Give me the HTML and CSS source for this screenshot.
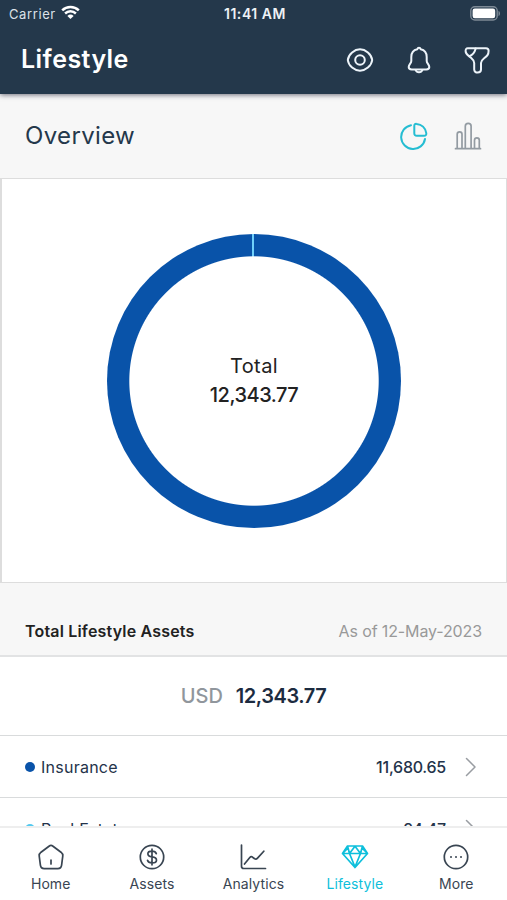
FILE: index.html
```html
<!DOCTYPE html>
<html lang="en">
<head>
<meta charset="utf-8">
<meta name="viewport" content="width=device-width, initial-scale=1">
<title>Lifestyle</title>
<link rel="stylesheet" href="styles.css">
</head>
<body>
<div class="app">
  <header class="header">
    <div class="status">
      <div class="carrier"><span>Carrier</span>
        <svg width="19" height="15" viewBox="0 0 19 15" fill="none" stroke="#fff" stroke-width="2.5"><path d="M1.2 5.4a12 12 0 0 1 16.6 0M4.1 8.5a7.8 7.8 0 0 1 10.8 0"/><path d="M9.5 14 6.4 10.9a4.5 4.5 0 0 1 6.2 0z" fill="#fff" stroke="none"/></svg>
      </div>
      <span class="clock">11:41 AM</span>
      <svg class="battery" width="31" height="15" viewBox="0 0 31 15"><rect x=".8" y=".8" width="26.4" height="13.2" rx="4" fill="#24384b" stroke="#7d8995" stroke-width="1.4"/><rect x="2.6" y="2.6" width="22.6" height="9.6" rx="2.2" fill="#fff"/><path d="M28.5 5c2 .6 2 4.400 0 5z" fill="#7d8995"/></svg>
    </div>
    <div class="titlebar">
      <h1 class="title">Lifestyle</h1>
      <div class="actions">
        <svg width="28" height="28" viewBox="0 0 28 28"><path d="M1.800 14C2.500 8 8.500 3.300 14 3.300S25.500 8 26.200 14C25.500 20 19.500 24.700 14 24.700S2.500 20 1.800 14z"/><circle cx="14" cy="14" r="4.800"/></svg>
        <svg width="28" height="28" viewBox="0 0 28 28"><path d="M14 1.800c1 0 1.500.8 1.700 1.500 4 .9 6 3.700 6 7.700v4c0 2.400 2.600 3.500 2.600 6 0 1.800-1.200 2.400-3 2.400H6.700c-1.800 0-3-.6-3-2.400 0-2.500 2.600-3.600 2.600-6v-4c0-4 2-6.800 6-7.700.2-.7.700-1.500 1.700-1.500z"/><path d="M10.600 24c1.200 3 5.600 3 6.800 0"/></svg>
        <svg width="28" height="28" viewBox="0 0 28 28"><path d="M4.800 2.200h18.200c1.800 0 2.600 1 2.600 2.500 0 4-1.500 5.300-4.500 7.600-2 1.600-3.100 2.700-3.100 4.700v6.600c0 4-6.800 4-6.800 0V17c0-2.200-1-3.300-3.200-5.200C5 9.400 2.600 8.500 2.600 5c0-1.700.6-2.800 2.200-2.800z"/><path d="M12.700 2.500C11.800 6 9.800 9 6.200 10.200"/></svg>
      </div>
    </div>
  </header>
  <section class="overview">
    <h2 class="overview-title">Overview</h2>
    <div class="toggles">
      <svg class="pie" width="28" height="28" viewBox="0 0 28 28"><path d="M11 3.200A12 12 0 1 0 25 17"/><path d="M14.300 4c0-1.600.8-2.300 2.300-2.100 5 .5 9 4 9.700 9.300.2 1.700-.6 2.500-2.200 2.500h-7.300c-1.700 0-2.500-.8-2.500-2.500z"/></svg>
      <svg class="bars" width="28" height="28" viewBox="0 0 28 28"><path d="M1.500 26.700h25M3.200 26.500V12.200a2.400 2.400 0 0 1 4.800 0v14.300M11.300 26.500V4.300a2.900 2.900 0 0 1 5.800 0v22.200M20.500 26.500v-8.300a2.400 2.400 0 0 1 4.800 0v8.300"/></svg>
    </div>
  </section>
  <section class="chart">
    <div class="donut"><span class="donut-label">Total</span><span class="donut-value">12,343.77</span></div>
  </section>
  <section class="summary">
    <h3 class="summary-title">Total Lifestyle Assets</h3>
    <span class="date">As of 12-May-2023</span>
  </section>
  <section class="total"><span class="currency">USD</span><span class="amount">12,343.77</span></section>
  <main class="list">
    <div class="row"><i class="dot"></i><span class="name">Insurance</span><span class="value">11,680.65</span><svg class="chevron" width="12" height="20" viewBox="0 0 12 20"><path d="m1.500 1.500 8.500 8.500-8.500 8.500"/></svg></div>
    <div class="row"><i class="dot dot-light"></i><span class="name">Real Estate</span><span class="value">24.47</span><svg class="chevron" width="12" height="20" viewBox="0 0 12 20"><path d="m1.500 1.500 8.500 8.500-8.500 8.500"/></svg></div>
  </main>
  <nav class="tabs">
    <a class="tab"><svg width="28" height="28" viewBox="0 0 28 28"><path d="M12 3.200c1.400-1 2.600-1 4 0l8 6c1.500 1.200 2 2 1.800 3.600l-1.200 9.400c-.3 2.500-1.300 3.500-3.800 3.500H7.200c-2.500 0-3.500-1-3.800-3.500L2.200 12.800C2 11.200 2.500 10.400 4 9.200zM14 17v4"/></svg><span>Home</span></a>
    <a class="tab"><svg width="28" height="28" viewBox="0 0 28 28"><circle cx="14" cy="14" r="11.700"/><path d="M18.300 10.600c-.6-1.700-2-2.400-4.300-2.400-5.500 0-5.500 5 0 5.700 6 .7 6 6 0 6-2.500 0-4-.9-4.500-2.600M14 6.200v15.600"/></svg><span>Assets</span></a>
    <a class="tab"><svg width="28" height="28" viewBox="0 0 28 28"><path d="M2.500 2v21.200c0 1.500.8 2.300 2.300 2.300H26.500M5.500 21l5.300-6.500c1-1.100 1.700-1.200 2.800-.3l2 1.500c1 .8 1.800.7 2.700-.3l6.500-7.200"/></svg><span>Analytics</span></a>
    <a class="tab active"><svg width="28" height="28" viewBox="0 0 28 28"><path d="M6.500 3h15l5 7.500L14 24.500 1.500 10.500zM1.500 10.500h25M6.500 3l2 7.500L14 24l5.500-13.500 2-7.500M8.500 10.500 14 3.300l5.500 7.200M2 10l5-5M26 10l-5-5"/></svg><span>Lifestyle</span></a>
    <a class="tab"><svg width="28" height="28" viewBox="0 0 28 28"><circle cx="14" cy="14" r="11.700"/><path class="ellipsis" d="M9 14h.01M14 14h.01M19 14h.01"/></svg><span>More</span></a>
  </nav>
</div>
</body>
</html>
```
FILE: styles.css
```css
* { box-sizing: border-box; }
body { margin: 0; background: #fff; font-family: Inter, "Liberation Sans", sans-serif; color: #24384b; }
h1, h2, h3 { margin: 0; }
svg { display: block; flex: none; fill: none; stroke-linecap: round; stroke-linejoin: round; }
.app { width: 100%; height: 900px; display: flex; flex-direction: column; overflow: hidden; }
.header { height: 94px; flex: none; background: #24384b; color: #fff; box-shadow: 0 1px 5px rgba(35, 35, 55, .65); z-index: 1; }
.status { height: 27px; padding: 0 6px 0 9px; display: grid; grid-template-columns: 1fr auto 1fr; align-items: center; font-size: 13px; }
.carrier { display: flex; align-items: center; gap: 5px; color: #dce2e8; letter-spacing: .6px; }
.carrier svg { stroke-linecap: butt; margin-top: -2px; }
.clock { font-weight: 600; font-size: 14px; letter-spacing: .55px; color: #edf1f5; }
.battery { justify-self: end; }
.titlebar { height: 64px; padding: 0 16px 0 21px; display: flex; align-items: center; justify-content: space-between; }
.title { font-size: 25px; line-height: 30px; font-weight: 600; letter-spacing: .45px; }
.actions { display: flex; gap: 30.500px; stroke: #edf4fa; stroke-width: 2; padding-top: 2px; }
.overview { height: 84px; flex: none; background: #f7f7f7; display: flex; align-items: center; justify-content: space-between; padding: 0 25px; }
.overview-title { font-weight: 400; font-size: 24px; letter-spacing: .35px; padding-bottom: 2px; }
.toggles { display: flex; gap: 26px; }
.pie { stroke: #25bdd2; stroke-width: 2; }
.bars { stroke: #939ba2; stroke-width: 1.700; }
.chart { height: 405px; flex: none; border: 2px solid #ddd; border-width: 1px 1px 1px 2px; display: flex; justify-content: center; padding-top: 55px; }
.donut { width: 294px; height: 294px; border-radius: 50%; background: radial-gradient(circle, #fff 124.200px, transparent 125.200px), linear-gradient(#70d0fa, #70d0fa) 145px 0 / 2px 50% no-repeat, #0953a9; display: flex; flex-direction: column; align-items: center; justify-content: center; color: #222; font-size: 20px; line-height: 29px; }
.donut-label { letter-spacing: .4px; }
.donut-value { letter-spacing: -.5px; font-weight: 500; }
.summary { height: 74px; flex: none; background: #f7f7f7; border-bottom: 2px solid #e2e3e4; padding: 24px 25px 0; display: flex; align-items: center; justify-content: space-between; font-size: 16px; }
.summary-title { font-size: 16px; font-weight: 600; color: #222; letter-spacing: .18px; }
.date { color: #999; letter-spacing: -.12px; }
.total { height: 79px; flex: none; border-bottom: 1px solid #d9dbdc; display: flex; align-items: center; justify-content: center; gap: 13px; font-size: 20px; }
.currency { color: #90969c; font-weight: 500; }
.amount { color: #1c2b40; font-weight: 600; letter-spacing: -.45px; }
.list { flex: 1; min-height: 0; overflow: hidden; }
.row { height: 62px; border-bottom: 1px solid #d9dbdc; padding: 0 30px 0 25px; display: flex; align-items: center; font-size: 16px; color: #24334a; }
.dot { width: 10px; height: 10px; border-radius: 50%; background: #0953a9; margin-right: 6px; }
.dot-light { background: #55c9ef; }
.name { letter-spacing: .25px; }
.value { margin-left: auto; font-weight: 500; letter-spacing: -.25px; }
.chevron { margin-left: 19px; stroke: #999da2; stroke-width: 1.500; }
.tabs { height: 74px; flex: none; border-top: 2px solid #eee; display: grid; grid-template-columns: repeat(5, 1fr); background: #fff; }
.tab { display: flex; flex-direction: column; align-items: center; padding-top: 15px; font-size: 14px; line-height: 18px; letter-spacing: .1px; color: #394552; }
.tab svg { stroke: currentColor; stroke-width: 1.700; margin-bottom: 4px; }
.tab .ellipsis { stroke-width: 2; }
.active { color: #0dbfdb; }
```
